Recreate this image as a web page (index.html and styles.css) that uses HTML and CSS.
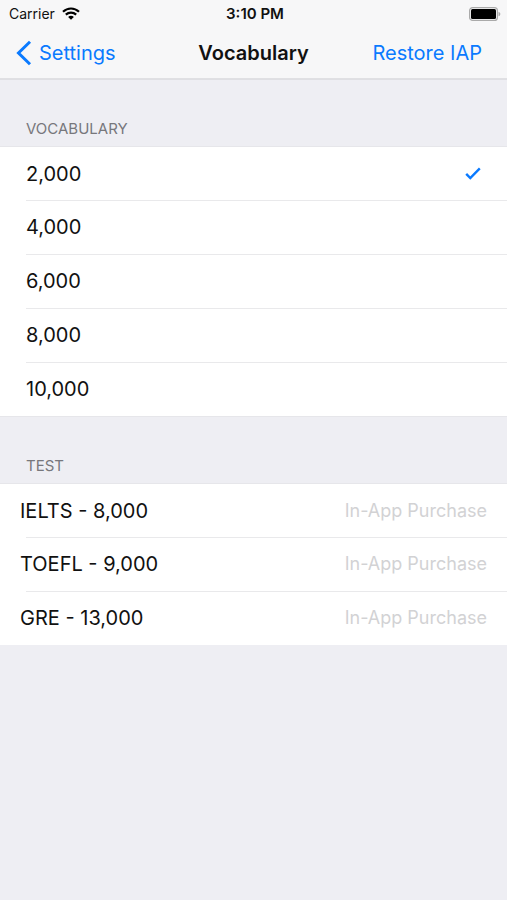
FILE: index.html
```
<!doctype html>
<html lang="en">
  <head>
    <meta charset="UTF-8" />
    <meta name="viewport" content="width=device-width, initial-scale=1.0" />
    <title>Vocabulary</title>
    <link rel="stylesheet" href="styles.css">
  </head>
  <body>
    <header class="header">
      <div class="status-bar">
        <div class="carrier">
          <span>Carrier</span>
          <svg class="wifi" viewBox="0 0 18 13" width="18" height="13" aria-hidden="true">
            <path d="M1 4.8C5.6.4 12.4.4 17 4.8" />
            <path d="M3.8 7.6c3-2.7 7.4-2.7 10.4 0" />
            <path class="wifi-dot" d="M9 12.7 6.1 9.9c1.6-1.4 4.2-1.4 5.8 0z" />
          </svg>
        </div>
        <span class="time">3:10 PM</span>
        <svg class="battery" viewBox="0 0 32 14" width="32" height="14" aria-hidden="true">
          <rect class="battery-case" x=".6" y=".6" width="27.8" height="12.8" rx="3" />
          <rect x="2" y="2" width="25" height="10" rx="1.5" />
          <path class="battery-cap" d="M29.5 4.7c2.4.8 2.4 3.8 0 4.6z" />
        </svg>
      </div>
      <nav class="nav-bar">
        <a class="back" href="#settings">
          <svg viewBox="0 0 16 26" width="16" height="26" aria-hidden="true">
            <path d="M14 1.8 2.5 13 14 24.2" />
          </svg>
          <span>Settings</span>
        </a>
        <h1>Vocabulary</h1>
        <button class="restore" type="button">Restore IAP</button>
      </nav>
    </header>

    <main>
      <section class="group">
        <h2 id="vocabulary-title">VOCABULARY</h2>
        <div class="list" role="radiogroup" aria-labelledby="vocabulary-title">
          <label class="row">
            <span>2,000</span>
            <input type="radio" name="size" value="2000" checked />
            <svg class="check" viewBox="0 0 16 13" width="16" height="13" aria-hidden="true">
              <path d="M1.2 6.8 5.3 11 14.8 1.4" />
            </svg>
          </label>
          <label class="row">
            <span>4,000</span>
            <input type="radio" name="size" value="4000" />
            <svg class="check" viewBox="0 0 16 13" width="16" height="13" aria-hidden="true">
              <path d="M1.2 6.8 5.3 11 14.8 1.4" />
            </svg>
          </label>
          <label class="row">
            <span>6,000</span>
            <input type="radio" name="size" value="6000" />
            <svg class="check" viewBox="0 0 16 13" width="16" height="13" aria-hidden="true">
              <path d="M1.2 6.8 5.3 11 14.8 1.4" />
            </svg>
          </label>
          <label class="row">
            <span>8,000</span>
            <input type="radio" name="size" value="8000" />
            <svg class="check" viewBox="0 0 16 13" width="16" height="13" aria-hidden="true">
              <path d="M1.2 6.8 5.3 11 14.8 1.4" />
            </svg>
          </label>
          <label class="row">
            <span>10,000</span>
            <input type="radio" name="size" value="10000" />
            <svg class="check" viewBox="0 0 16 13" width="16" height="13" aria-hidden="true">
              <path d="M1.2 6.8 5.3 11 14.8 1.4" />
            </svg>
          </label>
        </div>
      </section>

      <section class="group">
        <h2>TEST</h2>
        <div class="list">
          <button class="row test" type="button">
            <span>IELTS - 8,000</span>
            <span class="detail">In-App Purchase</span>
          </button>
          <button class="row test" type="button">
            <span>TOEFL - 9,000</span>
            <span class="detail">In-App Purchase</span>
          </button>
          <button class="row test" type="button">
            <span>GRE - 13,000</span>
            <span class="detail">In-App Purchase</span>
          </button>
        </div>
      </section>
    </main>
  </body>
</html>
```
FILE: styles.css
```
* {
  box-sizing: border-box;
}
body {
  margin: 0;
  background-color: #eeeef3;
  color: #111;
  font-family: Inter, Roboto, sans-serif;
  font-size: 20px;
  line-height: 24px;
}
button {
  border: none;
  background: none;
  color: inherit;
  font: inherit;
  text-align: left;
  cursor: pointer;
}
.header {
  background-color: #f7f7f8;
  border-bottom: 1px solid #e0e0e3;
  box-shadow: 0 1px #dfdfe3;
}
.status-bar,
.nav-bar {
  display: grid;
  grid-template-columns: 1fr auto 1fr;
  align-items: center;
}
.status-bar {
  height: 27px;
  padding: 0 6px 0 9px;
  font-size: 14px;
}
.carrier {
  display: flex;
  align-items: center;
  gap: 7px;
}
.wifi {
  fill: none;
  stroke: #000;
  stroke-width: 2.2;
}
.wifi-dot {
  fill: #000;
  stroke: none;
}
.time {
  font-size: 15px;
  font-weight: 600;
}
.battery {
  justify-self: end;
}
.battery-case {
  fill: none;
  stroke: #aaa;
  stroke-width: 1.2;
}
.battery-cap {
  fill: #aaa;
}
.nav-bar {
  height: 51px;
  padding: 0 16px;
}
.back {
  display: flex;
  align-items: center;
  gap: 7px;
  color: #0a7aff;
  text-decoration: none;
}
.back svg {
  fill: none;
  stroke: #0a7aff;
  stroke-width: 3;
}
h1 {
  margin: 0;
  font-size: 20px;
  font-weight: 600;
}
.restore {
  justify-self: end;
  padding: 0 9px;
  color: #0a7aff;
}
h2 {
  margin: 0;
  padding: 40px 26px 8px;
  color: #77777c;
  font-size: 15px;
  font-weight: 400;
  line-height: 20px;
}
.list {
  background-color: #fff;
  box-shadow: 0 0 0 1px #e6e6ea;
}
.row {
  display: flex;
  align-items: center;
  justify-content: space-between;
  width: 100%;
  height: 53px;
  padding: 0 26px;
  cursor: pointer;
}
.test {
  padding: 0 20px;
}
/* hairline between rows, inset on the left */
.row + .row {
  height: 54px;
  background: linear-gradient(#e9e9eb, #e9e9eb) 26px 0 / 100% 1px no-repeat;
}
.row input {
  position: absolute;
  opacity: 0;
}
.check {
  visibility: hidden;
  fill: none;
  stroke: #0a7aff;
  stroke-width: 2.4;
}
input:checked + .check {
  visibility: visible;
}
.detail {
  color: #d2d2d4;
  font-size: 18px;
}
```
